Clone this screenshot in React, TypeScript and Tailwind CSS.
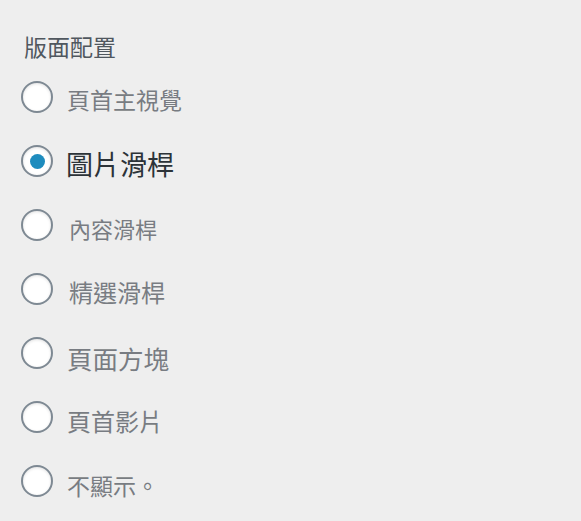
const options = [
  { label: '頁首主視覺', cls: 'text-[23px] leading-[23px] mt-[23px] ml-[14px] text-[#787c82]' },
  { label: '圖片滑桿', cls: 'text-[27px] leading-[27px] mt-[21px] ml-[13px] text-[#2c3338]', checked: true },
  { label: '內容滑桿', cls: 'text-[22px] leading-[22px] mt-[24px] ml-[16px] text-[#787c82]' },
  { label: '精選滑桿', cls: 'text-[24px] leading-[24px] mt-[23px] ml-[16px] text-[#787c82]' },
  { label: '頁面方塊', cls: 'text-[25.5px] leading-[25.5px] mt-[24px] ml-[14px] text-[#787c82]' },
  { label: '頁首影片', cls: 'text-[24px] leading-[24px] mt-[24px] ml-[14px] text-[#787c82]' },
  { label: '不顯示。', cls: 'text-[23px] leading-[23px] mt-[25px] ml-[14px] text-[#787c82]' },
];

function Radio({ checked }: { checked?: boolean }) {
  return (
    <span className="mt-[16px] w-[32px] h-[32px] shrink-0 rounded-full border-2 border-[#7e8993] bg-white shadow-[inset_0_1px_3px_rgba(0,0,0,0.12)] flex items-center justify-center">
      {checked && <span className="w-[15px] h-[15px] rounded-full bg-[#1e8cbe]" />}
    </span>
  );
}

export default function App() {
  return (
    <div
      className="w-[581px] h-[521px] bg-[#eeeeee] pl-[21px] pt-[35px] overflow-hidden"
      style={{ fontFamily: '"Noto Sans CJK TC", "Noto Sans", sans-serif' }}
    >
      <div className="ml-[3px] text-[23px] leading-[23px] text-[#50575e] mb-[7px]">版面配置</div>
      <div className="flex flex-col">
        {options.map((o) => (
          <label key={o.label} className="flex items-start h-[64px]">
            <Radio checked={o.checked} />
            <span className={o.cls}>{o.label}</span>
          </label>
        ))}
      </div>
    </div>
  );
}
